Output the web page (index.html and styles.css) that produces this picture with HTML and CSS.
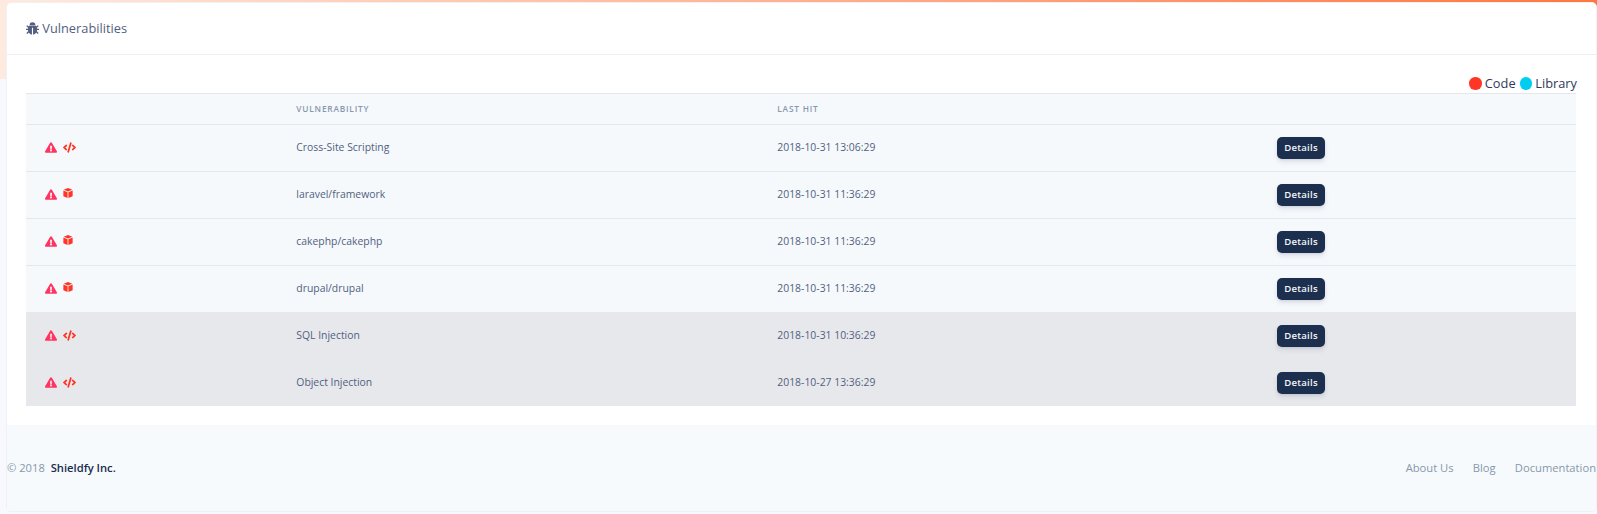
FILE: index.html
```html
<!DOCTYPE html>
<html lang="en">
<head>
<meta charset="utf-8">
<title>Vulnerabilities</title>
<link rel="stylesheet" href="styles.css">
</head>
<body>
<svg class="sprite" aria-hidden="true">
  <symbol id="warn" viewBox="0 0 576 512"><path d="M569.517 440.013C587.975 472.007 564.806 512 527.94 512H48.054c-36.937 0-59.999-40.055-41.577-71.987L246.423 23.985c18.467-32.009 64.72-31.951 83.154 0l239.94 416.028zM288 354c-25.405 0-46 20.595-46 46s20.595 46 46 46 46-20.595 46-46-20.595-46-46-46zm-43.673-165.346l7.418 136c.347 6.364 5.609 11.346 11.982 11.346h48.546c6.373 0 11.635-4.982 11.982-11.346l7.418-136c.375-6.874-5.098-12.654-11.982-12.654h-63.383c-6.884 0-12.356 5.78-11.981 12.654z"/></symbol>
  <symbol id="code" viewBox="0 0 640 512"><path d="M279 511l-61-18c-6-2-10-9-8-15L346 9c2-6 9-10 15-8l61 18c6 2 10 9 8 15L294 503c-2 6-9 10-15 8zM165 400l43-47c5-5 4-13-1-17l-91-80 91-80c5-4 6-12 1-17l-43-47c-5-5-12-5-17 0L4 247c-5 5-5 13 0 18l144 135c5 5 12 5 17 0zm327 0l144-135c5-5 5-13 0-18L492 112c-5-5-12-5-17 0l-43 46c-5 5-4 13 1 17l91 81-91 80c-5 4-6 12-1 17l43 47c5 5 12 5 17 0z"/></symbol>
  <symbol id="cube" viewBox="0 0 14 14"><path d="M7 0l6 2.500L7 5 1 2.500zM.5 3.600L6.400 6v8L.5 11.500zM13.500 3.600L7.600 6v8l5.900-2.500z"/></symbol>
  <symbol id="bug" viewBox="0 0 14 14"><path d="M3.900 3.400a3.100 3.100 0 0 1 6.200 0zM3.200 4h7.600l.4.900 1.500-1.500 1 .9-1.900 2v1H14v1.400h-2.200l-.1 1.200 1.900 2-1 1-1.700-1.700c-.9 1.500-1.900 2.200-3.300 2.300V6.200H6.400v7.300c-1.400-.1-2.400-.8-3.300-2.300l-1.700 1.700-1-1 1.900-2-.1-1.200H0V7.300h2.200v-1l-1.900-2 1-.9 1.500 1.500z"/></symbol>
</svg>
<div class="banner"></div>
<main class="card">
  <header class="card-header"><svg class="bug"><use href="#bug"/></svg><h3>Vulnerabilities</h3></header>
  <section class="card-body">
    <div class="legend"><i class="dot red"></i><span>Code</span><i class="dot cyan"></i><span>Library</span></div>
    <div class="table">
      <div class="row head"><span></span><span>Vulnerability</span><span>Last Hit</span><span></span></div>
      <div class="row"><span class="icons"><svg class="warn"><use href="#warn"/></svg><svg class="code"><use href="#code"/></svg></span><span>Cross-Site Scripting</span><span>2018-10-31 13:06:29</span><span><a class="btn">Details</a></span></div>
      <div class="row"><span class="icons"><svg class="warn"><use href="#warn"/></svg><svg class="cube"><use href="#cube"/></svg></span><span>laravel/framework</span><span>2018-10-31 11:36:29</span><span><a class="btn">Details</a></span></div>
      <div class="row"><span class="icons"><svg class="warn"><use href="#warn"/></svg><svg class="cube"><use href="#cube"/></svg></span><span>cakephp/cakephp</span><span>2018-10-31 11:36:29</span><span><a class="btn">Details</a></span></div>
      <div class="row"><span class="icons"><svg class="warn"><use href="#warn"/></svg><svg class="cube"><use href="#cube"/></svg></span><span>drupal/drupal</span><span>2018-10-31 11:36:29</span><span><a class="btn">Details</a></span></div>
      <div class="row seen"><span class="icons"><svg class="warn"><use href="#warn"/></svg><svg class="code"><use href="#code"/></svg></span><span>SQL Injection</span><span>2018-10-31 10:36:29</span><span><a class="btn">Details</a></span></div>
      <div class="row seen"><span class="icons"><svg class="warn"><use href="#warn"/></svg><svg class="code"><use href="#code"/></svg></span><span>Object Injection</span><span>2018-10-27 13:36:29</span><span><a class="btn">Details</a></span></div>
    </div>
  </section>
  <footer class="footer">
    <div class="copy">© 2018 <b>Shieldfy Inc.</b></div>
    <nav><a>About Us</a><a>Blog</a><a>Documentation</a></nav>
  </footer>
</main>
</body>
</html>
```
FILE: styles.css
```css
* { box-sizing: border-box; }
body {
  margin: 0;
  height: 514px;
  overflow: hidden;
  background: #f8f9fe;
  font: 12.8px/1.5 "Open Sans", sans-serif;
  color: #2f3a5a;
}
svg { display: block; fill: currentColor; flex: none; }
.sprite { position: absolute; width: 0; height: 0; }
.banner {
  position: absolute;
  inset: 0 0 auto;
  height: 79px;
  background: linear-gradient(90deg, #ffeadf, #ff7640);
}
.card {
  position: relative;
  height: 510px;
  margin: 2px 0 0 6px;
  border: 1px solid #f0f1f4;
  border-radius: 5px;
  background: #fff;
  overflow: hidden;
}
.card-header {
  display: flex;
  align-items: center;
  gap: 3.300px;
  height: 52px;
  padding: 0 19px;
  border-bottom: 1px solid #eeeff1;
  color: #525f7f;
}
.card-header h3 { margin: 0; font-size: 12.8px; font-weight: 400; }
.bug { width: 13px; height: 13px; }
.card-body { height: 370px; padding: 19px; }
.legend {
  display: flex;
  align-items: center;
  justify-content: flex-end;
  height: 19px;
}
.legend span { margin: 0 4px 0 3.200px; }
.legend span:last-child { margin-right: 0; }
.dot { width: 12.500px; height: 12.500px; border-radius: 50%; }
.red { background: #ff3526; }
.cyan { background: #00cdf0; }
.table { width: 1550px; color: #525f7f; }
.row {
  display: grid;
  grid-template-columns: 251px 481px 500px 1fr;
  align-items: center;
  height: 47px;
  border-top: 1px solid #e3e8ed;
  background: #f5f9fc;
  font-size: 10.4px;
}
.row > span { padding-left: 19.300px; }
.row > span:last-child { padding-left: 19px; }
.head {
  height: 31px;
  color: #8898aa;
  font-size: 8.32px;
  font-weight: 600;
  letter-spacing: .8px;
  text-transform: uppercase;
}
.seen { background: #e7e8ec; border-color: #e7e8ec; }
.row > .icons { display: flex; align-items: center; gap: 6px; padding: 0 0 2px 19px; color: #ff3526; }
.warn { width: 12px; height: 11px; color: #ff3460; }
.code { width: 13px; height: 11px; }
.cube { width: 10px; height: 10px; margin-top: -2px; }
.btn {
  display: block;
  width: 48px;
  height: 22px;
  border-radius: 5px;
  background: #1c2f4e;
  box-shadow: 0 3px 5px rgba(50, 50, 93, .11), 0 1px 2px rgba(0, 0, 0, .08);
  color: #f3f5f8;
  font-size: 9.6px;
  font-weight: 600;
  letter-spacing: .24px;
  line-height: 22px;
  text-align: center;
}
.footer {
  display: flex;
  align-items: center;
  justify-content: space-between;
  height: 86px;
  background: #f6fafd;
  color: #8898aa;
  font-size: 11.2px;
}
.footer b { margin-left: 3px; color: #172b4d; font-weight: 600; }
.footer nav { display: flex; gap: 19.200px; }
```
